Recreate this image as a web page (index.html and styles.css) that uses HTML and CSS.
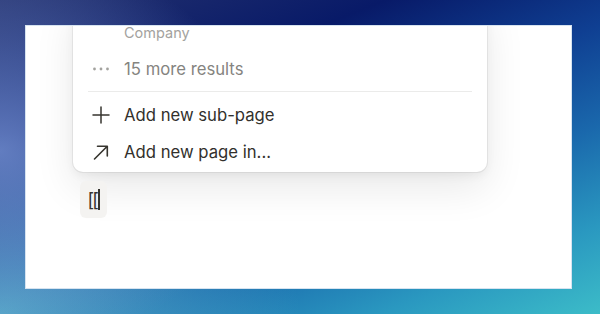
FILE: index.html
```html
<!DOCTYPE html>
<html lang="en">
<head>
<meta charset="utf-8">
<title>Link to page</title>
<link rel="stylesheet" href="styles.css">
</head>
<body>
  <div class="window">
    <div class="menu">
      <div class="result">
        <div class="result-sub">Company</div>
      </div>
      <div class="row row-muted">
        <span class="icon">
          <svg width="20" height="20" viewBox="0 0 20 20"><circle cx="3.5" cy="10" r="1.4" fill="#a3a29e"/><circle cx="10" cy="10" r="1.4" fill="#a3a29e"/><circle cx="16.5" cy="10" r="1.4" fill="#a3a29e"/></svg>
        </span>
        <span class="label">15 more results</span>
      </div>
      <div class="divider"></div>
      <div class="row">
        <span class="icon">
          <svg width="20" height="20" viewBox="0 0 20 20"><path d="M10 2v16M2 10h16" stroke="#37352f" stroke-width="1.5" stroke-linecap="round" fill="none"/></svg>
        </span>
        <span class="label">Add new sub-page</span>
      </div>
      <div class="row">
        <span class="icon">
          <svg width="20" height="20" viewBox="0 0 20 20"><path d="M3.5 17L16 4.5M6.5 4.2H16.3V14" stroke="#37352f" stroke-width="1.6" stroke-linecap="round" stroke-linejoin="round" fill="none"/></svg>
        </span>
        <span class="label">Add new page in...</span>
      </div>
    </div>
    <div class="editor">
      <span class="mention">[[<span class="caret"></span></span>
    </div>
  </div>
</body>
</html>
```
FILE: styles.css
```css
html, body {
  margin: 0;
  padding: 0;
}
body {
  width: 600px;
  height: 314px;
  box-sizing: border-box;
  padding: 25px 28px 25px 25px;
  overflow: hidden;
  font-family: Inter, "Noto Sans", sans-serif;
  background:
    radial-gradient(ellipse 260px 200px at 0% 48%, rgba(112, 140, 206, 0.85), rgba(112, 140, 206, 0) 100%),
    radial-gradient(ellipse 300px 180px at 0% 100%, rgba(100, 190, 210, 0.8), rgba(100, 190, 210, 0) 100%),
    linear-gradient(158deg, #26336f 0%, #081a68 28%, #0f3f92 48%, #1a68ac 66%, #2a98c0 84%, #3cbcc8 100%);
}
.window {
  width: 547px;
  height: 264px;
  box-sizing: border-box;
  background: #ffffff;
  border: 1px solid #d6e3f0;
  overflow: hidden;
  display: flex;
  flex-direction: column;
}
.menu {
  margin: -26px 0 0 47px;
  width: 414px;
  box-sizing: border-box;
  padding: 4px 4px 2px;
  background: #ffffff;
  border-radius: 10px;
  box-shadow:
    0 0 0 1px rgba(15, 15, 15, 0.06),
    0 4px 10px rgba(15, 15, 15, 0.05),
    0 16px 40px rgba(15, 15, 15, 0.09);
}
.result {
  padding: 20px 14px 9px 47px;
}
.result-sub {
  font-size: 14.5px;
  line-height: 18px;
  color: #a3a29e;
}
.row {
  display: flex;
  align-items: center;
  gap: 13px;
  height: 37px;
  padding-left: 14px;
  color: #32302c;
}
.row-muted {
  height: 36px;
  color: #85847f;
}
.icon {
  width: 20px;
  height: 20px;
  display: flex;
  align-items: center;
  justify-content: center;
  flex: none;
}
.label {
  font-size: 16.7px;
  line-height: 20px;
  white-space: nowrap;
}
.divider {
  height: 1px;
  background: #ebebea;
  margin: 4px 11px;
}
.editor {
  padding: 9px 0 0 54px;
}
.mention {
  display: inline-flex;
  align-items: center;
  width: 27px;
  height: 37px;
  box-sizing: border-box;
  padding-left: 8px;
  background: #f4f3f1;
  border-radius: 6px;
  font-family: "DejaVu Sans Condensed", "DejaVu Sans", sans-serif;
  font-size: 19px;
  letter-spacing: -2px;
  color: #37352f;
}
.caret {
  display: inline-block;
  width: 2px;
  height: 21px;
  margin-left: 1px;
  background: #37352f;
}
```
